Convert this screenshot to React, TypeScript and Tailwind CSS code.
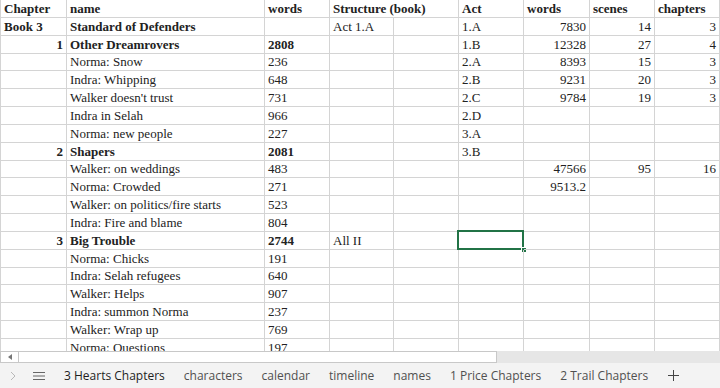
import React from "react";

type C = { t: string; b?: boolean; r?: boolean };

const E: C = { t: "" };
const c = (t: string, b = false, r = false): C => ({ t, b, r });

function row(
  a: C,
  name: C,
  words: C,
  struct: C,
  act: C,
  w2: C,
  sc: C,
  ch: C
): C[] {
  return [a, name, words, struct, E, act, w2, sc, ch];
}

const rows: C[][] = [
  row(c("Chapter", true), c("name", true), c("words", true), c("Structure (book)", true), c("Act", true), c("words", true), c("scenes", true), c("chapters", true)),
  row(c("Book 3", true), c("Standard of Defenders", true), E, c("Act 1.A"), c("1.A"), c("7830", false, true), c("14", false, true), c("3", false, true)),
  row(c("1", true, true), c("Other Dreamrovers", true), c("2808", true), E, c("1.B"), c("12328", false, true), c("27", false, true), c("4", false, true)),
  row(E, c("Norma: Snow"), c("236"), E, c("2.A"), c("8393", false, true), c("15", false, true), c("3", false, true)),
  row(E, c("Indra: Whipping"), c("648"), E, c("2.B"), c("9231", false, true), c("20", false, true), c("3", false, true)),
  row(E, c("Walker doesn't trust"), c("731"), E, c("2.C"), c("9784", false, true), c("19", false, true), c("3", false, true)),
  row(E, c("Indra in Selah"), c("966"), E, c("2.D"), E, E, E),
  row(E, c("Norma: new people"), c("227"), E, c("3.A"), E, E, E),
  row(c("2", true, true), c("Shapers", true), c("2081", true), E, c("3.B"), E, E, E),
  row(E, c("Walker: on weddings"), c("483"), E, E, c("47566", false, true), c("95", false, true), c("16", false, true)),
  row(E, c("Norma: Crowded"), c("271"), E, E, c("9513.2", false, true), E, E),
  row(E, c("Walker: on politics/fire starts"), c("523"), E, E, E, E, E),
  row(E, c("Indra: Fire and blame"), c("804"), E, E, E, E, E),
  row(c("3", true, true), c("Big Trouble", true), c("2744", true), c("All II"), E, E, E, E),
  row(E, c("Norma: Chicks"), c("191"), E, E, E, E, E),
  row(E, c("Indra: Selah refugees"), c("640"), E, E, E, E, E),
  row(E, c("Walker: Helps"), c("907"), E, E, E, E, E),
  row(E, c("Indra: summon Norma"), c("237"), E, E, E, E, E),
  row(E, c("Walker: Wrap up"), c("769"), E, E, E, E, E),
  row(E, c("Norma: Questions"), c("197"), E, E, E, E, E),
];

const tabs = [
  "3 Hearts Chapters",
  "characters",
  "calendar",
  "timeline",
  "names",
  "1 Price Chapters",
  "2 Trail Chapters",
];

export default function App() {
  return (
    <div className="w-[720px] h-[388px] bg-white overflow-hidden flex flex-col">
      <div className="h-[351px] overflow-hidden font-['Liberation_Serif',serif] text-[13px] leading-[15px] text-[#222222]">
        {rows.map((r, ri) => (
          <div
            key={ri}
            className={
              "grid grid-cols-[67px_198px_65px_64px_65px_65px_66px_65px_65px] " +
              (ri === 0 ? "h-[18px]" : "h-[17.83px]")
            }
          >
            {r.map((cell, ci) => {
              const noRight = ri === 0 && ci === 3;
              const selected = ri === 13 && ci === 5;
              return (
                <div
                  key={ci}
                  className={
                    "relative flex items-end pb-[1px] px-[3px] whitespace-nowrap border-b border-[#d4d4d4] " +
                    (noRight ? "" : "border-r ") +
                    (ci === 0 ? "border-l " : "") +
                    (cell.r ? "justify-end " : "justify-start ") +
                    (cell.b ? "font-bold" : "")
                  }
                >
                  <span>{cell.t}</span>
                  {selected && (
                    <>
                      <div className="absolute left-[-2px] right-[-1px] top-[-2px] bottom-[-1px] border-2 border-[#217346]" />
                      <div className="absolute right-[-4px] bottom-[-4px] w-[6px] h-[6px] bg-[#217346] border border-white" />
                    </>
                  )}
                </div>
              );
            })}
          </div>
        ))}
      </div>
      <div className="h-[12px] flex bg-[#e6e6e6]">
        <div className="w-[19px] h-full bg-white border border-[#c8c8c8] flex items-center justify-center">
          <svg width="4" height="6" viewBox="0 0 4 6">
            <path d="M4 0 L0 3 L4 6 Z" fill="#777" />
          </svg>
        </div>
        <div className="w-[478px] h-full bg-white border-y border-r border-[#c8c8c8]" />
      </div>
      <div className="flex-1 bg-[#f3f3f3] flex items-center font-['Open_Sans',sans-serif] text-[12px] text-[#505050]">
        <div className="w-[24px] flex justify-center pl-[1px]">
          <svg width="6" height="10" viewBox="0 0 6 10">
            <path d="M1 1 L5 5 L1 9" stroke="#b8b8b8" strokeWidth="1" fill="none" />
          </svg>
        </div>
        <div className="w-[30px] flex justify-center">
          <svg width="12" height="10" viewBox="0 0 12 10">
            <path d="M0 1.5 H12 M0 5 H12 M0 8.5 H12" stroke="#666" strokeWidth="1" />
          </svg>
        </div>
        {tabs.map((t, i) => (
          <div
            key={t}
            className={
              "px-[9.5px] whitespace-nowrap " +
              (i === 0 ? "text-[#1e1e1e] pl-[10px]" : "")
            }
          >
            {t}
          </div>
        ))}
        <div className="px-[10px]">
          <svg width="11" height="11" viewBox="0 0 11 11">
            <path d="M5.5 0 V11 M0 5.5 H11" stroke="#444" strokeWidth="1" />
          </svg>
        </div>
      </div>
    </div>
  );
}
